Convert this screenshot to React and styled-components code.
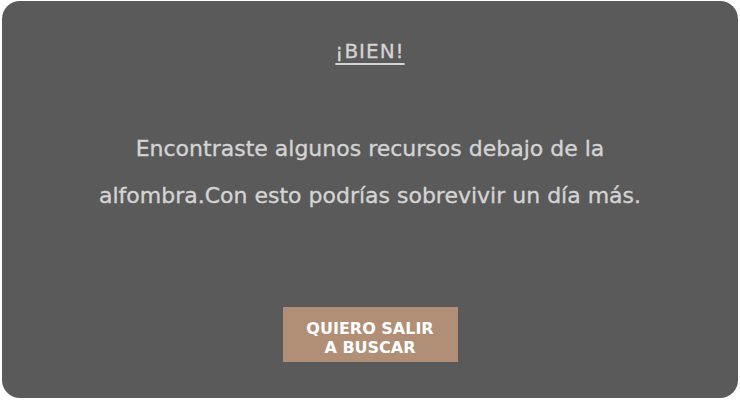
import styled, { createGlobalStyle } from 'styled-components';

const GlobalStyle = createGlobalStyle`
    html, body {
        margin: 0;
        padding: 0;
        background: #ffffff;
    }
`;

const Page = styled.div`
    width: 740px;
    height: 400px;
    padding: 1px 2px 2px 2px;
    box-sizing: border-box;
`;

const Card = styled.div`
    height: 100%;
    background: #5a5a5a;
    border-radius: 18px;
    display: flex;
    flex-direction: column;
    align-items: center;
    font-family: 'DejaVu Sans', sans-serif;
    color: #d4d4d4;
    box-sizing: border-box;
    padding-top: 39px;
`;

const Title = styled.h1`
    margin: 0;
    font-size: 20px;
    line-height: 23px;
    font-weight: normal;
    letter-spacing: 1px;
    text-decoration: underline;
    text-underline-offset: 5px;
    -webkit-text-stroke: 0.3px #d4d4d4;
`;

const Message = styled.p`
    margin: 62px 0 0 0;
    width: 560px;
    text-align: center;
    font-size: 22px;
    line-height: 47px;
    -webkit-text-stroke: 0.35px #d4d4d4;
`;

const Button = styled.button`
    margin-top: 88px;
    width: 175px;
    height: 55px;
    padding: 7px 0 0 0;
    border: none;
    background: #b08f76;
    color: #ffffff;
    font-family: 'DejaVu Sans', sans-serif;
    font-size: 16px;
    line-height: 19px;
    font-weight: bold;
    text-transform: uppercase;
    cursor: pointer;
`;

const App = () => {
    return (
        <>
            <GlobalStyle />
            <Page>
                <Card>
                    <Title>¡BIEN!</Title>
                    <Message>
                        Encontraste algunos recursos debajo de la alfombra.Con esto podrías sobrevivir un día más.
                    </Message>
                    <Button>
                        Quiero salir
                        <br />a buscar
                    </Button>
                </Card>
            </Page>
        </>
    );
};

export default App;
